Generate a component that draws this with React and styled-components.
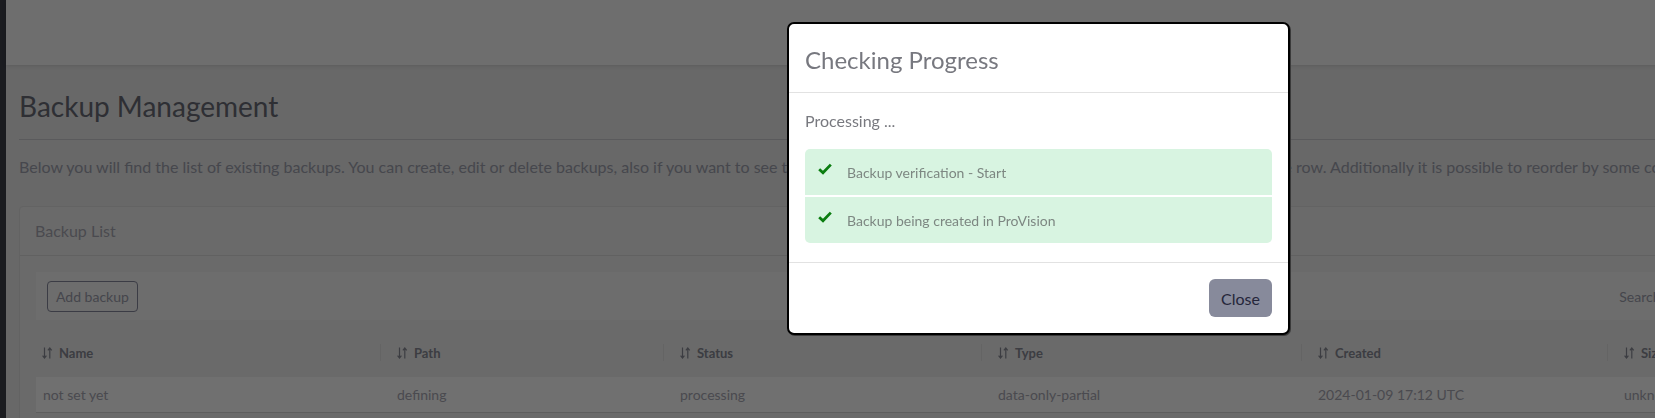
import React from "react";
import styled, { createGlobalStyle } from "styled-components";

const COLUMNS = ["Name", "Path", "Status", "Type", "Created", "Size"];

const ROWS = [
  ["not set yet", "defining", "processing", "data-only-partial", "2024-01-09 17:12 UTC", "unknown"],
];

const STEPS = ["Backup verification - Start", "Backup being created in ProVision"];

const GlobalStyle = createGlobalStyle`
  html, body {
    margin: 0;
    padding: 0;
    overflow: hidden;
    background: #d0d0d0;
  }
  body {
    font-family: Lato, "Noto Sans", sans-serif;
  }
  * {
    box-sizing: border-box;
  }
`;

const SortIcon = () => (
  <svg width="11" height="12" viewBox="0 0 11 12" fill="none" stroke="currentColor" strokeWidth="1.2">
    <path d="M2.5 0.5 V11 M0.6 8.6 L2.5 11 L4.4 8.6" />
    <path d="M7.8 11.5 V1 M5.9 3.4 L7.8 1 L9.7 3.4" />
  </svg>
);

const CheckIcon = () => (
  <svg width="14" height="12" viewBox="0 0 14 12" fill="none" stroke="#0b7d10" strokeWidth="2.8">
    <path d="M1.2 6.2 L5 9.8 L12.8 1.6" />
  </svg>
);

const App = () => {
  return (
    <>
      <GlobalStyle />
      <Page>
        <SideStrip />
        <Main>
          <TopBar />
          <Content>
            <Title>Backup Management</Title>
            <Rule />
            <Lead>
              Below you will find the list of existing backups. You can create, edit or delete backups, also if
              you want to see the details of a backup, you only need to click on the corresponding table row.
              Additionally it is possible to reorder by some columns.
            </Lead>
            <Card>
              <CardHeader>Backup List</CardHeader>
              <CardBody>
                <Toolbar>
                  <OutlineButton>Add backup</OutlineButton>
                  <SearchGroup>
                    <SearchLabel>Search:</SearchLabel>
                    <SearchInput />
                  </SearchGroup>
                </Toolbar>
                <TableRow $head>
                  {COLUMNS.map((col, i) => (
                    <HeadCell key={col} $first={i === 0}>
                      <SortIcon />
                      <span>{col}</span>
                    </HeadCell>
                  ))}
                </TableRow>
                {ROWS.map((row, r) => (
                  <TableRow key={r}>
                    {row.map((value, i) => (
                      <Cell key={i} $first={i === 0}>
                        {value}
                      </Cell>
                    ))}
                  </TableRow>
                ))}
              </CardBody>
            </Card>
          </Content>
        </Main>
      </Page>

      <Backdrop />
      <Modal>
        <ModalHeader>
          <ModalTitle>Checking Progress</ModalTitle>
        </ModalHeader>
        <ModalBody>
          <BodyText>Processing ...</BodyText>
          <StepList>
            {STEPS.map((step) => (
              <Step key={step}>
                <StepIcon>
                  <CheckIcon />
                </StepIcon>
                <span>{step}</span>
              </Step>
            ))}
          </StepList>
        </ModalBody>
        <ModalFooter>
          <CloseButton>Close</CloseButton>
        </ModalFooter>
      </Modal>
    </>
  );
};

const Page = styled.div`
  display: flex;
  width: 100vw;
  height: 418px;
  overflow: hidden;
`;

const SideStrip = styled.div`
  width: 6px;
  flex-shrink: 0;
  background: #363841;
`;

const Main = styled.div`
  display: flex;
  flex-direction: column;
  flex-shrink: 0;
  width: 1960px;
  background: #d0d0d0;
`;

const TopBar = styled.div`
  height: 65px;
  flex-shrink: 0;
  background: #dddddd;
  box-shadow: 0 1px 4px rgba(0, 0, 0, 0.12);
`;

const Content = styled.div`
  width: 1894px;
  padding-left: 13px;
`;

const Title = styled.h1`
  margin: 24px 0 0;
  font-size: 28px;
  line-height: 34px;
  font-weight: 400;
  color: #5c5e68;
`;

const Rule = styled.hr`
  margin: 16px 0 0;
  border: 0;
  border-top: 1px solid #b4b4b8;
`;

const Lead = styled.p`
  margin: 15px 0 0;
  font-size: 16px;
  line-height: 24px;
  color: #8c8e9a;
  white-space: nowrap;
`;

const Card = styled.div`
  margin-top: 27px;
  background: #d4d4d4;
  border: 1px solid #c6c6c6;
  border-radius: 4px;
`;

const CardHeader = styled.div`
  padding: 12px 15px;
  font-size: 16px;
  line-height: 24px;
  color: #94949f;
  border-bottom: 1px solid #c2c2c2;
`;

const CardBody = styled.div`
  padding: 16px;
`;

const Toolbar = styled.div`
  display: flex;
  align-items: center;
  justify-content: space-between;
  padding: 8px 11px;
  background: #dadada;
`;

const OutlineButton = styled.button`
  height: 31px;
  margin-top: 1px;
  padding: 0 8px;
  font-family: inherit;
  font-size: 14px;
  color: #8a8c98;
  background: transparent;
  border: 1px solid #76788a;
  border-radius: 4px;
`;

const SearchGroup = styled.div`
  display: flex;
  align-items: center;
  gap: 8px;
`;

const SearchLabel = styled.span`
  font-size: 14px;
  color: #8a8c98;
`;

const SearchInput = styled.div`
  width: 200px;
  height: 31px;
  border: 1px solid #c0c0c0;
  border-radius: 4px;
  background: #e4e4e4;
`;

const TableRow = styled.div`
  display: grid;
  grid-template-columns: 344px 283px 318px 320px 306px 1fr;
  align-items: center;
  height: ${(p) => (p.$head ? "57px" : "36px")};
  padding-top: ${(p) => (p.$head ? "9px" : "0")};
  background: ${(p) => (p.$head ? "transparent" : "#e0e0e0")};
  border-bottom: ${(p) => (p.$head ? "0" : "1px solid #bcbcbc")};
`;

const HeadCell = styled.div`
  position: relative;
  display: flex;
  align-items: center;
  gap: 6px;
  padding-left: ${(p) => (p.$first ? "6px" : "17px")};
  font-size: 13px;
  font-weight: 700;
  color: #787a84;

  &::before {
    content: "";
    display: ${(p) => (p.$first ? "none" : "block")};
    position: absolute;
    left: 0;
    top: -1px;
    height: 17px;
    border-left: 1px solid #c8c8c8;
  }
`;

const Cell = styled.div`
  padding-left: ${(p) => (p.$first ? "7px" : "17px")};
  font-size: 14px;
  color: #94949f;
  white-space: nowrap;
`;

const Backdrop = styled.div`
  position: fixed;
  inset: 0;
  z-index: 10;
  background: rgba(0, 0, 0, 0.5);
`;

const Modal = styled.div`
  position: fixed;
  top: 22px;
  left: 787px;
  z-index: 11;
  width: 503px;
  background: #fff;
  border: 2px solid #000;
  border-radius: 7px;
  box-shadow: 1px 1px 0 #3a3a3a;
`;

const ModalHeader = styled.div`
  padding: 18px 16px 14px;
  border-bottom: 1px solid #e2e2e2;
`;

const ModalTitle = styled.h4`
  margin: 0;
  font-size: 24px;
  line-height: 36px;
  font-weight: 400;
  color: #77787f;
`;

const ModalBody = styled.div`
  padding: 16px 16px 19px;
`;

const BodyText = styled.div`
  font-size: 16px;
  line-height: 24px;
  color: #78797f;
`;

const StepList = styled.div`
  display: flex;
  flex-direction: column;
  gap: 2px;
  margin-top: 16px;
  border-radius: 5px;
  overflow: hidden;
`;

const Step = styled.div`
  display: flex;
  align-items: flex-start;
  height: 46px;
  padding: 13px 13px 12px;
  background: #d8f4e1;
  font-size: 14px;
  line-height: 21px;
  color: #7d8782;
`;

const StepIcon = styled.span`
  display: flex;
  width: 16px;
  margin: 1px 13px 0 0;
`;

const ModalFooter = styled.div`
  display: flex;
  justify-content: flex-end;
  padding: 16px;
  border-top: 1px solid #e2e2e2;
`;

const CloseButton = styled.button`
  height: 38px;
  padding: 0 12px;
  font-family: inherit;
  font-size: 16px;
  color: #25263a;
  background: #878a9b;
  border: 0;
  border-radius: 6px;
`;

export default App;
